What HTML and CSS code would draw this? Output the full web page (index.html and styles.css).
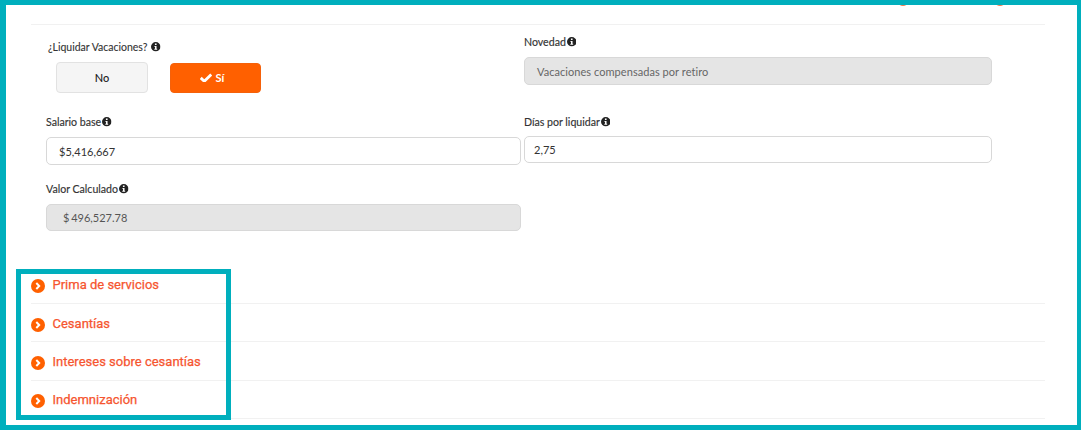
FILE: index.html
```html
<!DOCTYPE html>
<html lang="es">
<head>
<meta charset="utf-8">
<title>Liquidación</title>
<link rel="stylesheet" href="styles.css">
</head>
<body>
<svg class="sprite" width="0" height="0" aria-hidden="true">
  <symbol id="info" viewBox="0 0 16 16">
    <path fill-rule="evenodd" d="M8 0a8 8 0 1 1 0 16A8 8 0 0 1 8 0zM6.6 2.6v2.6h2.8V2.6zM5.6 6.6v1.6h1.2v3H5.6v1.8h4.8v-1.8H9.3V6.6z"/>
  </symbol>
</svg>
<main class="frame">
  <div class="topbar"><span class="top-dot"></span><span class="top-dot top-dot-second"></span><span class="top-text">Prueba Total</span></div>
  <section class="content">
    <div class="form">
      <div class="col-left">
        <div class="toggle-field">
          <div class="label label-toggle">¿Liquidar Vacaciones? <svg class="info"><use href="#info"/></svg></div>
          <div class="toggle">
            <button class="btn btn-no">No</button>
            <button class="btn btn-yes"><svg class="check" viewBox="0 0 16 12"><path d="M1 6.5 5.7 11 15 2" fill="none" stroke="#fff" stroke-width="3.8"/></svg>Sí</button>
          </div>
        </div>
        <div class="field field-salary">
          <div class="label">Salario base<svg class="info"><use href="#info"/></svg></div>
          <div class="input">$5,416,667</div>
        </div>
        <div class="field field-value">
          <div class="label">Valor Calculado<svg class="info"><use href="#info"/></svg></div>
          <div class="input input-disabled input-value">$ 496,527.78</div>
        </div>
      </div>
      <div class="col-right">
        <div class="field">
          <div class="label">Novedad<svg class="info"><use href="#info"/></svg></div>
          <div class="input input-disabled input-news">Vacaciones compensadas por retiro</div>
        </div>
        <div class="field field-days">
          <div class="label">Días por liquidar<svg class="info"><use href="#info"/></svg></div>
          <div class="input input-days">2,75</div>
        </div>
      </div>
    </div>
    <ul class="accordion">
      <li class="acc-item"><span class="acc-icon"><svg viewBox="0 0 14 14"><path d="M5.3 4 8.2 7 5.3 10" fill="none" stroke="#fff" stroke-width="2"/></svg></span>Prima de servicios</li>
      <li class="acc-item"><span class="acc-icon"><svg viewBox="0 0 14 14"><path d="M5.3 4 8.2 7 5.3 10" fill="none" stroke="#fff" stroke-width="2"/></svg></span>Cesantías</li>
      <li class="acc-item"><span class="acc-icon"><svg viewBox="0 0 14 14"><path d="M5.3 4 8.2 7 5.3 10" fill="none" stroke="#fff" stroke-width="2"/></svg></span>Intereses sobre cesantías</li>
      <li class="acc-item"><span class="acc-icon"><svg viewBox="0 0 14 14"><path d="M5.3 4 8.2 7 5.3 10" fill="none" stroke="#fff" stroke-width="2"/></svg></span>Indemnización</li>
    </ul>
  </section>
  <div class="highlight"></div>
</main>
</body>
</html>
```
FILE: styles.css
```css
* { box-sizing: border-box; }
html, body { margin: 0; padding: 0; background: #fff; }
body { font-family: "Lato", sans-serif; color: #3d3d3d; overflow: hidden; }
.sprite { position: absolute; }
.frame {
  position: relative;
  width: 1081px;
  height: 430px;
  border: solid #00afbd;
  border-width: 5px 4px 5px 6px;
  overflow: hidden;
}
.topbar {
  height: 1px;
  overflow: hidden;
  display: flex;
  justify-content: flex-end;
  align-items: flex-end;
  padding-right: 3px;
  font-size: 11px;
  line-height: 11px;
}
.top-dot { width: 12px; height: 12px; border-radius: 50%; background: #f47a4a; flex: none; margin-right: 85px; }
.top-dot-second { margin-right: 8px; }
.top-text { color: #444; flex: none; }
.content { padding: 18px 32px 0 25px; }
.form {
  border-top: 1px solid #f1f1f1;
  display: grid;
  grid-template-columns: 478px 468px;
  height: 241.7px;
  padding-left: 15px;
}
.label {
  font-size: 10.6px;
  line-height: 14px;
  color: #333;
  display: flex;
  align-items: center;
  -webkit-text-stroke: 0.15px #333;
}
.label-toggle { padding-left: 2px; gap: 3px; font-size: 10.5px; -webkit-text-stroke: 0.1px #333; }
.info { width: 9.5px; height: 9.5px; margin-left: 1px; fill: #222; flex: none; }
.toggle-field { padding-top: 15px; }
.toggle { display: flex; align-items: center; gap: 22px; margin-top: 8px; padding-left: 10px; }
.btn {
  width: 92px;
  height: 31px;
  border-radius: 4px;
  font-family: "Lato", sans-serif;
  font-size: 11px;
  font-weight: 700;
  display: flex;
  align-items: center;
  justify-content: center;
  padding: 0;
}
.btn-no { background: #f5f5f5; border: 1px solid #e2e2e2; color: #222; font-weight: 500; }
.btn-yes { background: #ff6000; border: 1px solid #f5610a; color: #fff; width: 91px; height: 30px; padding-right: 7px; }
.check { width: 12px; height: 9px; margin-right: 4px; }
.input {
  height: 28px;
  border: 1px solid #d8d8d8;
  border-radius: 5px;
  background: #fff;
  font-size: 11px;
  color: #333;
  display: flex;
  align-items: center;
  padding-left: 12px;
}
.input-disabled { background: #e5e5e5; color: #555; }
.input-value { padding-left: 16px; height: 27px; word-spacing: -1px; }
.input-news { color: #666; letter-spacing: 0.05px; }
.input-days { height: 27px; padding-left: 9px; }
.field { display: flex; flex-direction: column; gap: 8px; }
.col-left { width: 475px; }
.col-right { padding-top: 10px; }
.field-salary { margin-top: 22px; }
.field-value { margin-top: 17px; }
.field-days { margin-top: 30px; gap: 7px; }
.accordion { list-style: none; margin: 0; padding: 0; font-family: "Roboto", sans-serif; }
.acc-item {
  height: 38.33px;
  padding-top: 1px;
  display: flex;
  align-items: center;
  gap: 7.5px;
  border-bottom: 1px solid #f1f1f1;
  font-size: 13px;
  font-weight: 400;
  -webkit-text-stroke: 0.25px #f6552f;
  color: #f6552f;
}
.acc-icon {
  width: 14px;
  height: 14px;
  border-radius: 50%;
  background: #ff6000;
  display: block;
  flex: none;
  margin-top: 3px;
  -webkit-text-stroke: 0;
}
.acc-icon svg { display: block; width: 14px; height: 14px; }
.highlight {
  position: absolute;
  left: 10px;
  top: 264px;
  width: 215px;
  height: 151px;
  border: 5px solid #00afbd;
}
```
